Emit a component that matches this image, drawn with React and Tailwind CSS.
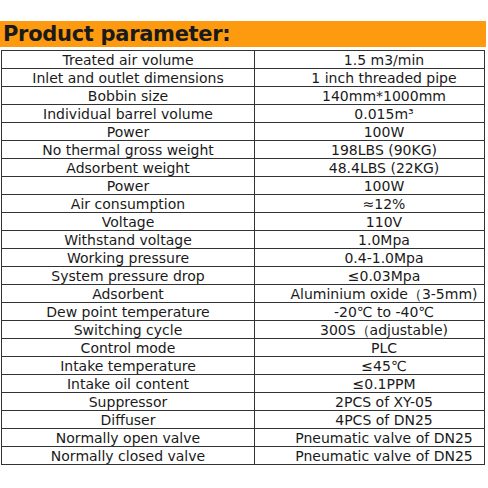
const rows = [
  ["Treated air volume", "1.5 m3/min"],
  ["Inlet and outlet dimensions", "1 inch threaded pipe"],
  ["Bobbin size", "140mm*1000mm"],
  ["Individual barrel volume", "0.015m³"],
  ["Power", "100W"],
  ["No thermal gross weight", "198LBS (90KG)"],
  ["Adsorbent weight", "48.4LBS (22KG)"],
  ["Power", "100W"],
  ["Air consumption", "≈12%"],
  ["Voltage", "110V"],
  ["Withstand voltage", "1.0Mpa"],
  ["Working pressure", "0.4-1.0Mpa"],
  ["System pressure drop", "≤0.03Mpa"],
  ["Adsorbent", "Aluminium oxide（3-5mm)"],
  ["Dew point temperature", "-20℃ to -40℃"],
  ["Switching cycle", "300S（adjustable)"],
  ["Control mode", "PLC"],
  ["Intake temperature", "≤45℃"],
  ["Intake oil content", "≤0.1PPM"],
  ["Suppressor", "2PCS of XY-05"],
  ["Diffuser", "4PCS of DN25"],
  ["Normally open valve", "Pneumatic valve of DN25"],
  ["Normally closed valve", "Pneumatic valve of DN25"],
];

export default function App() {
  return (
    <div className="w-[488px] h-[488px] bg-white text-[#1a1a1a] font-['DejaVu_Sans',Verdana,sans-serif]">
      <div className="pt-[21px]">
        <div className="h-[26px] w-[486px] bg-[#fd9a0f] pl-[3px] flex items-center">
          <span className="text-[21px] font-bold leading-none text-[#1a1a1a] tracking-[-0.3px]">Product parameter:</span>
        </div>
      </div>
      <div className="mt-[3px] ml-[1px] w-[484px] border border-[#333]">
        {rows.map((r, i) => (
          <div key={i} className={"flex h-[17px] " + (i < rows.length - 1 ? "box-content border-b border-[#333]" : "")}>
            <div className="w-[253px] border-r border-[#333] flex items-center justify-center text-[14px] leading-none pt-[1px]">{r[0]}</div>
            <div className="flex-1 flex items-center justify-center text-[14px] leading-none pt-[1px] pl-[29px] whitespace-nowrap">{r[1]}</div>
          </div>
        ))}
      </div>
    </div>
  );
}
